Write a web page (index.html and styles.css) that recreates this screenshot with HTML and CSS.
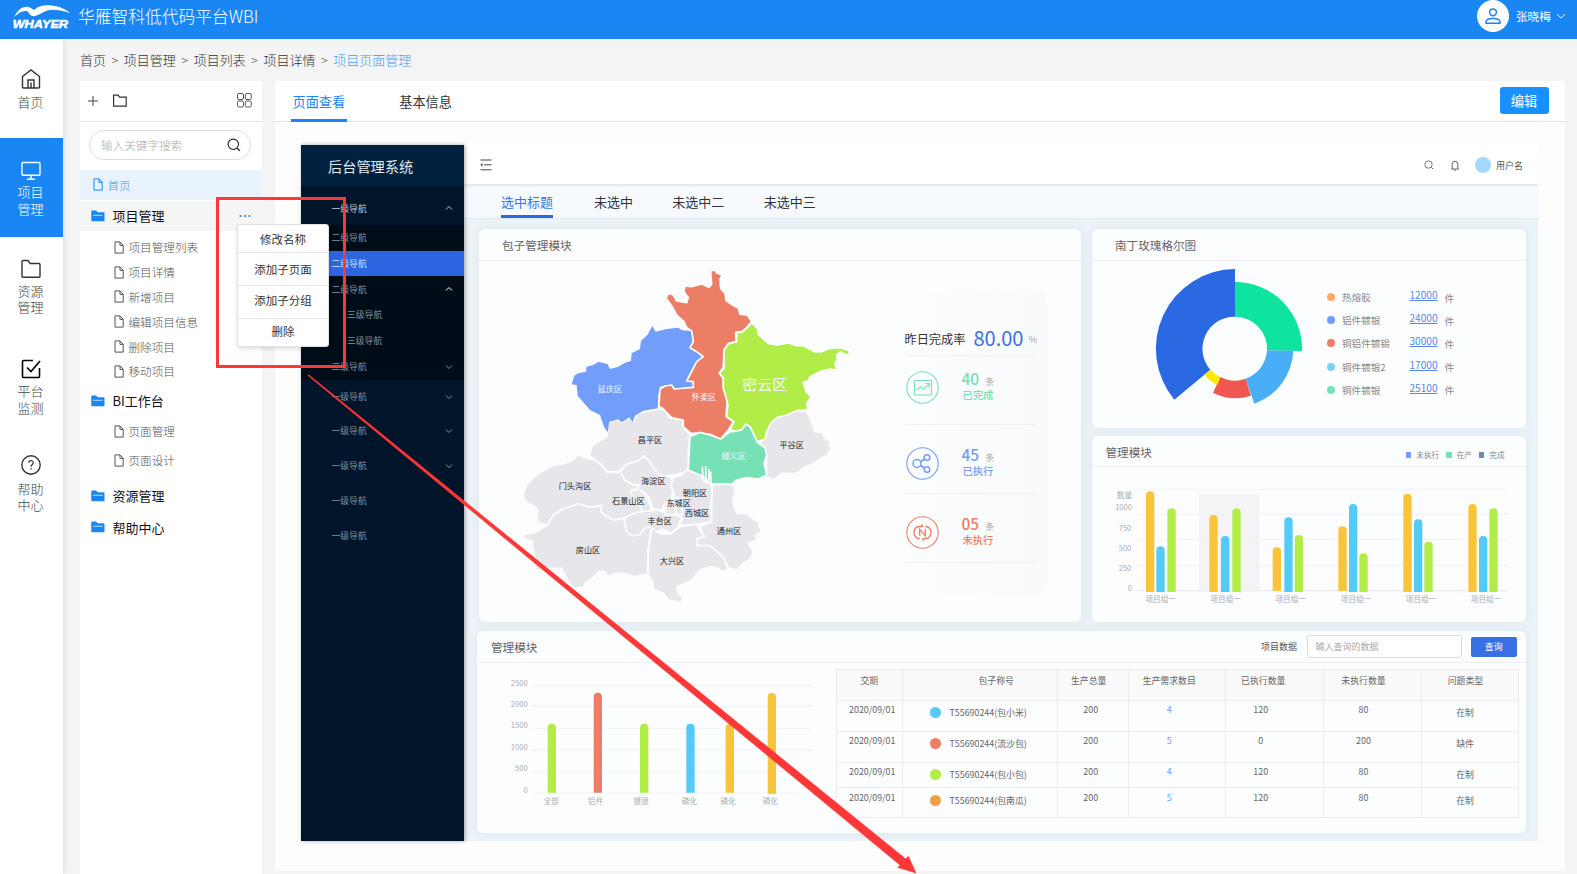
FILE: index.html
```html
<!DOCTYPE html>
<html lang="zh-CN">
<head>
<meta charset="utf-8">
<title>华雁智科低代码平台WBI</title>
<link rel="stylesheet" href="styles.css">
</head>
<body>
<svg class="defs" width="0" height="0">
  <symbol id="file" viewBox="0 0 10 13"><path d="M1 .9h5l3.2 3.3v7.9H1zM6 1v3.4h3.1" fill="none" stroke="currentColor" stroke-linejoin="round"/></symbol>
  <symbol id="folder" viewBox="0 0 14 12"><path d="M.3 1.200Q.3.4 1.100.4h4l1.500 1.800h6.100q.8 0 .8.800v7.400q0 .9-.9.900H1.200q-.9 0-.9-.9z" fill="#1b86f2"/><path d="M2.300 5.300h9.200" stroke="#b9dcff"/></symbol>
  <symbol id="up" viewBox="0 0 8 6"><path d="M1 4.500 4 1.500l3 3" fill="none" stroke="currentColor"/></symbol>
  <symbol id="down" viewBox="0 0 8 6"><path d="M1 1.500l3 3 3-3" fill="none" stroke="currentColor"/></symbol>
  <symbol id="search" viewBox="0 0 14 14"><circle cx="6.300" cy="6.300" r="5.200" fill="none" stroke="currentColor" stroke-width="1.100"/><path d="M10.200 10.200l2.700 2.700" stroke="currentColor" stroke-width="1.300"/></symbol>
</svg>

<header class="topbar">
  <svg class="logo" viewBox="36 0 180 117" width="60" height="39">
    <path d="M43 51C52 31 65 19 81 20C90 21 97 26 102 30C113 19 129 14 149 16C178 18 200 29 211 40C187 31 163 27 144 31C127 35 117 48 100 49C91 49 88 39 82 34C69 31 56 38 43 51Z" fill="#fff"/>
    <text x="38" y="84" textLength="166" lengthAdjust="spacingAndGlyphs" class="logo-text">WHAYER</text>
  </svg>
  <h1>华雁智科低代码平台WBI</h1>
  <div class="account">
    <svg width="32" height="32" viewBox="0 0 32 32"><circle cx="16" cy="16" r="16" fill="#fff"/><g fill="none" stroke="#1b86f2" stroke-width="1.500"><circle cx="16" cy="12.300" r="3.400"/><path d="M9 23.200v-1.200c0-2.500 3.500-3.600 7-3.600s7 1.100 7 3.600v1.200z"/></g></svg>
    <span>张晓梅</span>
    <svg width="10" height="7" viewBox="0 0 10 7"><path d="M1 1l4 4 4-4" fill="none" stroke="#fff"/></svg>
  </div>
</header>

<div class="shell">
  <nav class="rail">
    <a class="rail-item home"><svg width="20" height="20" viewBox="0 0 20 20"><path d="M1.500 7.500 10 1l8.500 6.500V18q0 1-1 1h-15q-1 0-1-1zM7 19v-8h6v8M10 13.500V19"/></svg><span>首页</span></a>
    <a class="rail-item active"><svg width="20" height="20" viewBox="0 0 20 20"><path d="M2 1.500h16q1 0 1 1v10.700q0 1-1 1H2q-1 0-1-1V2.500q0-1 1-1zM10 14.200V18M6 18.300h8"/></svg><span>项目<br>管理</span></a>
    <a class="rail-item"><svg width="20" height="20" viewBox="0 0 20 20"><path d="M2 1.500h5l2.200 3H18q1 0 1 1v11.700q0 1-1 1H2q-1 0-1-1V2.500q0-1 1-1z"/></svg><span>资源<br>管理</span></a>
    <a class="rail-item dark"><svg width="20" height="20" viewBox="0 0 20 20"><path d="M12 1.500H2.500q-1 0-1 1v15q0 1 1 1h15q1 0 1-1V9M6 8.500l4 4L19 2"/></svg><span>平台<br>监测</span></a>
    <a class="rail-item help"><svg width="20" height="20" viewBox="0 0 20 20"><circle cx="10" cy="10" r="9.200"/><path d="M7.700 7.800Q7.900 5.700 10 5.700t2.300 2q0 1.200-1.300 2-1 .7-1 2.100M10 13v1.400" stroke-width="1.200"/></svg><span>帮助<br>中心</span></a>
  </nav>

  <main>
    <div class="crumbs"><span>首页</span><i>&gt;</i><span>项目管理</span><i>&gt;</i><span>项目列表</span><i>&gt;</i><span>项目详情</span><i>&gt;</i><b>项目页面管理</b></div>
    <div class="columns">
      <aside class="tree">
        <div class="tree-tools">
          <svg width="10" height="10" viewBox="0 0 10 10"><path d="M5 0v10M0 5h10" stroke="#444"/></svg>
          <svg class="tool-folder" width="14" height="13" viewBox="0 0 14 13"><path d="M.6 1.100h4.500l1.500 2h6.600v9.100H.6z" fill="none" stroke="#333" stroke-width="1.200"/></svg>
          <svg class="tool-grid" width="15" height="15" viewBox="0 0 15 15"><g fill="none" stroke="#555"><rect x=".5" y=".5" width="6" height="6" rx="1.500"/><rect x="8.300" y=".5" width="6" height="6" rx="1.500"/><rect x=".5" y="8" width="6" height="6" rx="1.500"/><rect x="8.300" y="8" width="6" height="6" rx="1.500"/></g></svg>
        </div>
        <div class="tree-search"><span>输入关键字搜索</span><svg width="14" height="14"><use href="#search"/></svg></div>
        <ul>
          <li class="root"><svg width="10" height="13"><use href="#file"/></svg>首页</li>
          <li class="group open"><svg width="14" height="12"><use href="#folder"/></svg>项目管理<svg class="dots" width="12" height="4" viewBox="0 0 12 4"><g fill="#1b86f2"><circle cx="1.500" cy="2" r="1.100"/><circle cx="6" cy="2" r="1.100"/><circle cx="10.500" cy="2" r="1.100"/></g></svg></li>
          <li class="leaf"><svg width="10" height="13"><use href="#file"/></svg>项目管理列表</li>
          <li class="leaf"><svg width="10" height="13"><use href="#file"/></svg>项目详情</li>
          <li class="leaf"><svg width="10" height="13"><use href="#file"/></svg>新增项目</li>
          <li class="leaf"><svg width="10" height="13"><use href="#file"/></svg>编辑项目信息</li>
          <li class="leaf"><svg width="10" height="13"><use href="#file"/></svg>删除项目</li>
          <li class="leaf"><svg width="10" height="13"><use href="#file"/></svg>移动项目</li>
          <li class="group bi"><svg width="14" height="12"><use href="#folder"/></svg>BI工作台</li>
          <li class="leaf pages"><svg width="10" height="13"><use href="#file"/></svg>页面管理</li>
          <li class="leaf design"><svg width="10" height="13"><use href="#file"/></svg>页面设计</li>
          <li class="group res"><svg width="14" height="12"><use href="#folder"/></svg>资源管理</li>
          <li class="group hlp"><svg width="14" height="12"><use href="#folder"/></svg>帮助中心</li>
        </ul>
        <div class="menu"><a>修改名称</a><a>添加子页面</a><a>添加子分组</a><a>删除</a></div>
      </aside>

      <section class="panel">
        <div class="panel-tabs"><a class="on">页面查看</a><a>基本信息</a><button>编辑</button></div>
        <div class="preview">
          <div class="side">
            <div class="side-title">后台管理系统</div>
            <div class="nav1 first">一级导航<svg width="8" height="6"><use href="#up"/></svg></div>
            <div class="sub">
              <div>二级导航</div>
              <div class="sel">二级导航</div>
              <div class="lit">二级导航<svg width="8" height="6"><use href="#up"/></svg></div>
              <div class="third">三级导航</div>
              <div class="third">三级导航</div>
              <div class="end-row">二级导航<svg width="8" height="6"><use href="#down"/></svg></div>
            </div>
            <div class="nav1 tight">一级导航<svg width="8" height="6"><use href="#down"/></svg></div>
            <div class="nav1">一级导航<svg width="8" height="6"><use href="#down"/></svg></div>
            <div class="nav1">一级导航<svg width="8" height="6"><use href="#down"/></svg></div>
            <div class="nav1">一级导航</div>
            <div class="nav1">一级导航</div>
          </div>
          <div class="board">
            <div class="board-head">
              <svg width="12" height="12" viewBox="0 0 12 12"><path d="M.5 1h11M4 5.800h7.500M.5 10.800h11" stroke="#444"/><path d="M2.500 3.800v4L.5 5.800z" fill="#444"/></svg>
              <svg class="bh-search" width="10" height="10"><use href="#search"/></svg>
              <svg class="bh-bell" width="8" height="11" viewBox="0 0 8 11"><path d="M1.200 9V4.200Q1.200 1.200 4 1.200t2.800 3V9M.2 9h7.600M3.200 10.300h1.600" fill="none" stroke="#555" stroke-width=".9"/></svg>
              <i class="bh-avatar"></i><span>用户名</span>
            </div>
            <div class="board-tabs"><a class="on">选中标题</a><a>未选中</a><a>未选中二</a><a>未选中三</a></div>
            <div class="cards">
              <section class="card map-card">
                <h2>包子管理模块</h2>
                <div class="map-body">
                  <svg class="map" viewBox="0 18 1050 1062" width="350" height="354">
                    <g stroke="#fcfdff" stroke-width="5" stroke-linejoin="round">
                      <g fill="#e7e6eb">
                        <path d="M38 718L50 690L78 660L105 645L125 632L160 627L190 615L203 598L222 608L255 615L275 630L290 650L335 652L345 676L372 690L392 688L388 707L362 707L368 730L390 752L415 755L425 770L380 772L345 790L308 795L285 780L272 770L275 752L240 757L205 747L160 762L130 780L110 812L80 798L85 770L75 755L45 738Z"/>
                        <path d="M38 840L75 832L110 812L130 780L160 762L205 747L240 757L275 752L272 770L290 784L308 795L342 790L350 830L368 842L388 840L405 818L425 816L415 875L412 957L375 965L340 955L312 956L292 966L286 950L268 950L245 972L225 985L220 998L190 1000L172 975L155 940L118 940L76 946L80 925L68 880L66 858L45 852Z"/>
                        <path d="M238 600L248 570L290 545L297 500L325 493L335 502L358 487L370 500L383 477L420 468L458 460L480 488L518 495L522 520L540 540L535 585L535 640L522 652L490 660L472 662L455 665L430 640L420 620L400 603L385 617L350 628L325 650L292 650L275 630L255 615Z"/>
                        <path d="M330 650L350 628L385 617L400 603L420 620L430 640L455 665L480 662L490 690L485 730L465 745L455 768L428 760L415 725L395 707L372 705L392 688L372 690L345 676Z"/>
                        <path d="M362 707L385 703L405 718L420 748L425 770L400 773L388 750L370 735Z"/>
                        <path d="M342 790L380 772L440 765L500 780L515 785L505 815L485 835L455 822L435 838L425 816L405 818L388 840L368 842L350 830Z"/>
                        <path d="M483 690L490 668L515 660L530 645L570 660L583 680L603 686L607 720L600 760L605 800L575 805L535 810L510 812L518 790L492 775L485 745L500 730L490 715Z"/>
                        <path d="M467 745L497 727L497 779L465 779Z"/><path d="M499 727L515 730L516 779L499 779Z"/>
                        <path d="M607 690L640 688L668 682L675 715L668 740L680 775L710 775L738 798L743 792L748 815L755 830L736 842L740 855L715 865L730 890L722 910L700 925L680 945L655 938L642 910L610 880L595 872L560 872L562 850L582 845L570 815L605 800L605 765Z"/>
                        <path d="M425 820L455 838L485 835L510 815L560 808L582 845L562 850L560 872L595 872L610 880L642 910L653 942L640 950L620 938L600 935L570 945L555 965L540 978L500 995L505 1015L520 1030L515 1042L475 1035L460 1015L430 1002L428 980L414 957L415 890Z"/>
                        <path d="M770 530L785 495L820 482L855 468L890 468L905 500L915 530L937 532L945 550L962 560L958 572L968 583L955 590L952 605L940 605L910 625L880 640L860 655L815 655L790 675L770 665L770 600L750 568Z"/>
                      </g>
                      <path d="M185 388L193 362L205 355L228 350L230 335L250 330L265 320L293 328L300 342L325 335L345 323L363 318L365 295L390 282L393 258L412 240L427 213L437 230L470 222L505 218L515 226L545 228L548 262L540 278L562 292L578 308L560 320L552 345L530 378L550 383L550 395L520 398L493 402L480 390L450 395L445 420L443 460L400 467L375 482L368 502L358 487L335 502L325 493L298 500L293 532L282 515L270 480L240 465L203 422L200 390Z" fill="#729dfa" stroke="none"/>
                      <path d="M468 130L475 115L490 120L500 138L530 143L535 128L522 110L525 93L545 95L575 87L597 97L605 88L602 48L615 45L620 54L636 60L630 72L632 100L645 115L648 137L668 150L685 160L690 178L712 180L725 200L708 220L695 230L677 232L678 260L655 265L642 285L640 335L628 355L640 370L640 400L652 435L648 485L670 500L655 525L632 552L600 538L565 534L543 535L520 515L520 495L485 488L458 460L447 455L450 402L465 393L485 390L493 402L550 397L550 380L530 378L560 320L580 305L560 290L540 278L550 260L545 228L530 218L522 200L500 180L485 152Z" fill="#eb7e65"/>
                      <path d="M680 260L680 232L695 232L712 218L725 203L743 222L745 238L760 252L775 265L800 270L835 264L860 272L880 272L905 285L915 291L935 290L960 280L990 278L1020 288L1015 300L1000 297L992 290L980 300L982 315L975 325L980 345L960 342L930 350L900 365L894 378L880 382L888 410L903 425L890 445L894 465L865 465L830 480L800 488L782 505L770 530L765 553L742 560L720 515L708 508L695 525L670 530L662 522L672 500L650 485L654 450L640 400L640 370L628 354L642 340L642 285L655 267Z" fill="#b2ec46"/>
                      <path d="M540 545L570 532L600 540L632 552L660 530L670 530L695 525L708 508L720 515L742 562L765 578L770 600L762 625L770 660L745 672L710 668L680 675L665 688L603 686L580 665L570 660L535 645Z" fill="#76e0b6"/>
                    </g>
                    <path d="M577 635l2 38M587 634l1 38q6 8 9 0v-30M602 650l1 34" fill="none" stroke="#fff" stroke-width="5"/>
                    <g class="map-names"><g class="white"><text x="300" y="411">延庆区</text><text x="582" y="436">怀柔区</text><text x="671" y="613">顺义区</text><text class="big" x="764" y="406">密云区</text></g>
                    <text x="420" y="565">昌平区</text><text x="845" y="579">平谷区</text><text x="195" y="702">门头沟区</text><text x="430" y="688">海淀区</text><text x="355" y="747">石景山区</text><text x="555" y="722">朝阳区</text><text x="506" y="752">东城区</text><text x="561" y="783">西城区</text><text x="449" y="807">丰台区</text><text x="657" y="837">通州区</text><text x="234" y="895">房山区</text><text x="486" y="926">大兴区</text></g>
                  </svg>
                  <div class="stats">
                    <div class="rate"><span>昨日完成率</span><b>80.00</b><small>%</small></div>
                    <div class="stat green"><svg width="33" height="33" viewBox="0 0 33 33"><circle cx="16.500" cy="16.500" r="15.700"/><rect x="8.500" y="9.500" width="17" height="14.500" rx=".8"/><path d="M11 19l3.500-3.500 3 3 5.500-5.700M19.500 12.500h3.700v4.500"/></svg><div><b>40</b><small>条</small><p>已完成</p></div></div>
                    <div class="stat blue"><svg width="33" height="33" viewBox="0 0 33 33"><circle cx="16.500" cy="16.500" r="15.700"/><g stroke-width="1.500"><circle cx="11" cy="16.500" r="4"/><circle cx="21" cy="10.500" r="2.800"/><circle cx="21" cy="22.500" r="2.800"/><path d="M14.600 14.500l4-2.500M14.600 18.500l4 2.500"/></g></svg><div><b>45</b><small>条</small><p>已执行</p></div></div>
                    <div class="stat red"><svg width="33" height="33" viewBox="0 0 33 33"><circle cx="16.500" cy="16.500" r="15.700"/><path d="M16.500 10.500h-3.500a5 6 0 0 0 0 12h.8M19.300 10.500h.7a5 6 0 0 1 0 12h-3.200M15.500 8.300l1.300 2.200M17.500 24.900l-1-2.400M13.700 19.800v-6.600l5.600 6.600v-6.600" stroke-width="1.300"/></svg><div><b>05</b><small>条</small><p>未执行</p></div></div>
                  </div>
                </div>
              </section>
              <section class="card rose-card">
                <h2>南丁玫瑰格尔图</h2>
                <div class="rose-body">
                  <svg viewBox="6 108 690 500" width="230" height="166.700">
                    <path d="M435 132A239 239 0 0 0 253 524L361 434A96 96 0 0 1 435 275Z" fill="#2b69e2"/>
                    <path d="M435 171A200 200 0 0 1 636 378L531 376A96 96 0 0 0 435 275Z" fill="#0ee3a0"/>
                    <path d="M610 377A175 175 0 0 1 493 536L467 461A96 96 0 0 0 531 376Z" fill="#4aaef7"/>
                    <path d="M483 512A148 148 0 0 1 369 503L391 456A96 96 0 0 0 467 461Z" fill="#f0574e"/>
                    <path d="M382 480A122 122 0 0 1 343 449L361 434A96 96 0 0 0 391 456Z" fill="#ffe900"/>
                  </svg>
                  <ul class="legend">
                    <li><i class="c-orange"></i><span>热熔胶</span><a>12000</a><em>件</em></li>
                    <li><i class="c-blue"></i><span>铝件镀银</span><a>24000</a><em>件</em></li>
                    <li><i class="c-red"></i><span>铜铝件镀锡</span><a>30000</a><em>件</em></li>
                    <li><i class="c-sky"></i><span>铜件镀银2</span><a>17000</a><em>件</em></li>
                    <li><i class="c-green"></i><span>铜件镀银</span><a>25100</a><em>件</em></li>
                  </ul>
                </div>
              </section>
              <section class="card bars-card">
                <h2>管理模块<span class="keys"><i class="c-blue"></i>未执行<i class="c-green"></i>在产<i class="c-slate"></i>完成</span></h2>
                <svg viewBox="6 111 1302 464" width="434" height="154.700">
                  <rect x="327" y="192" width="182" height="292" fill="#f4f4f6"/>
                  <path d="M142 178h1110M142 253h1110M142 328h1110M142 406h1110" stroke="#f0f1f4" stroke-width="3"/><path d="M142 482h1110M1108 482v8" stroke="#e6e9ef" stroke-width="3" fill="none"/>
                  <g fill="#f8c53a"><path d="M168 486V196q0-12 12.500-12t12.500 12V486z"/><path d="M358 486V267q0-12 12.500-12t12.500 12V486z"/><path d="M548 483V364q0-12 12.500-12t12.500 12V483z"/><path d="M745 483V301q0-12 12.500-12t12.500 12V483z"/><path d="M940 486V203q0-12 12.500-12t12.500 12V486z"/><path d="M1135 486V234q0-12 12.500-12t12.500 12V486z"/></g>
                  <g fill="#54caf6"><path d="M199 486V361q0-12 12.500-12t12.500 12V486z"/><path d="M393 486V330q0-12 12.500-12t12.500 12V486z"/><path d="M583 486V274q0-12 12.500-12t12.500 12V486z"/><path d="M777 486V234q0-12 12.500-12t12.500 12V486z"/><path d="M972 486V280q0-12 12.500-12t12.500 12V486z"/><path d="M1167 486V330q0-12 12.500-12t12.500 12V486z"/></g>
                  <g fill="#b2ec46"><path d="M232 486V247q0-12 12.500-12t12.500 12V486z"/><path d="M427 486V247q0-12 12.500-12t12.500 12V486z"/><path d="M614 486V327q0-12 12.500-12t12.500 12V486z"/><path d="M808 486V382q0-12 12.500-12t12.500 12V486z"/><path d="M1003 486V347q0-12 12.500-12t12.500 12V486z"/><path d="M1198 486V247q0-12 12.500-12t12.500 12V486z"/></g>
                  <g class="axis end"><text x="126" y="203">数量</text><text x="126" y="241">1000</text><text x="124" y="303">750</text><text x="124" y="363">500</text><text x="124" y="423">250</text><text x="126" y="482">0</text></g>
                  <g class="axis"><text x="212" y="517">项目组一</text><text x="407" y="517">项目组一</text><text x="602" y="517">项目组一</text><text x="798" y="517">项目组一</text><text x="993" y="517">项目组一</text><text x="1188" y="517">项目组一</text></g>
                </svg>
              </section>
              <section class="card data-card">
                <div class="data-head"><h2>管理模块</h2><label>项目数据</label><div class="field">输入查询的数据</div><button>查询</button></div>
                <div class="data-body">
                  <svg viewBox="21 114 1077 510" width="359" height="170">
                    <path d="M188 181h838M188 244h838M188 310h838M188 374h838M188 439h838M188 504h838" stroke="#f0f2f5" stroke-width="3"/>
                    <path d="M233 503V309q0-13 12.500-13t12.500 13V503z" fill="#b2ec46"/><path d="M371 503V216q0-13 12.500-13t12.500 13V503z" fill="#eb7e65"/><path d="M510 503V309q0-13 12.500-13t12.500 13V503z" fill="#b2ec46"/><path d="M649 503V309q0-13 12.500-13t12.500 13V503z" fill="#54caf6"/><path d="M767 503V309q0-13 12.500-13t12.500 13V503z" fill="#f8c53a"/><path d="M893 506V217q0-13 12.500-13t12.500 13V506z" fill="#f8c53a"/>
                    <g class="axis end"><text x="173" y="182">2500</text><text x="173" y="246">2000</text><text x="173" y="309">1500</text><text x="173" y="375">1000</text><text x="173" y="439">500</text><text x="173" y="504">0</text></g>
                    <g class="axis"><text x="244" y="538">全部</text><text x="377" y="538">铝件</text><text x="513" y="538">镀银</text><text x="658" y="538">磷化</text><text x="774" y="538">磷化</text><text x="901" y="538">磷化</text></g>
                  </svg>
                  <table>
                    <colgroup><col class="w1"><col class="w2"><col class="w3"><col class="w4"><col class="w5"><col class="w6"><col class="w7"></colgroup>
                    <tr class="th"><td class="date-th">交期</td><td class="name-th">包子称号</td><td>生产总量</td><td>生产需求数目</td><td>已执行数量</td><td>未执行数量</td><td>问题类型</td></tr>
                    <tr><td class="date">2020/09/01</td><td class="name"><i class="c-cyan"></i>T55690244(包小米)</td><td>200</td><td class="num">4</td><td>120</td><td>80</td><td class="kind">在制</td></tr>
                    <tr><td class="date">2020/09/01</td><td class="name"><i class="c-red"></i>T55690244(流沙包)</td><td>200</td><td class="num">5</td><td>0</td><td>200</td><td class="kind">缺件</td></tr>
                    <tr class="short"><td class="date">2020/09/01</td><td class="name"><i class="c-lime"></i>T55690244(包小包)</td><td>200</td><td class="num">4</td><td>120</td><td>80</td><td class="kind">在制</td></tr>
                    <tr class="last"><td class="date">2020/09/01</td><td class="name"><i class="c-amber"></i>T55690244(包南瓜)</td><td>200</td><td class="num">5</td><td>120</td><td>80</td><td class="kind">在制</td></tr>
                  </table>
                </div>
              </section>
            </div>
          </div>
        </div>
      </section>
    </div>
  </main>
</div>
<svg class="callout" width="1577" height="874" viewBox="0 0 1577 874"><rect x="217.500" y="198.500" width="127" height="168" fill="none" stroke="#fc3737" stroke-width="3"/><path d="M308.800 374.800L905.600 858.800L908.500 856.300L916 873L897.700 867.600L900.200 865.300L308.200 375.800Z" fill="#fc3737" stroke="#fc3737" stroke-width=".5"/></svg>
</body>
</html>
```

FILE: styles.css
```css
* { box-sizing: border-box; }
html, body { margin: 0; height: 874px; overflow: hidden; }
body { position: relative; background: #f4f4f4; font-family: "Noto Sans CJK SC", "Noto Sans", sans-serif; color: #333; font-size: 13px; }
ul { list-style: none; margin: 0; padding: 0; }
h1, h2, p { margin: 0; font-weight: 400; }
i, em { font-style: normal; }
svg { display: block; flex: none; }
button { border: 0; padding: 0; font-family: inherit; color: #fff; }
.defs { position: absolute; }

/* Top bar */
.topbar { height: 39px; background: #1a86f3; display: flex; align-items: center; padding-left: 12px; color: #fff; }
.logo-text { font: italic 700 33px "Liberation Sans", sans-serif; fill: #fff; stroke: #fff; stroke-width: 1.5; }
.topbar h1 { font-size: 16.750px; font-weight: 300; line-height: 32px; height: 39px; margin-left: 6px; white-space: nowrap; }
.account { margin-left: auto; display: flex; align-items: center; height: 32px; align-self: flex-start; margin-right: 11px; font-size: 11.7px; }
.account span { margin: 0 5px 1px 7px; }

.shell { display: flex; height: 835px; }
.rail { width: 63px; background: #fff; box-shadow: 1px 0 5px rgba(0,0,0,.1); flex: none; }
.rail-item { display: flex; flex-direction: column; align-items: center; padding-right: 2px; height: 98.500px; padding-top: 22px; color: #444; font-size: 13px; line-height: 16.7px; text-align: center; font-weight: 300; }
.rail-item svg { fill: none; stroke: #333; stroke-width: 1.4; }
.rail-item span { margin-top: 4px; }
.rail-item.home { height: 99px; padding-top: 30px; }
.rail-item.home span { margin-top: 5px; }
.rail-item.active { background: #1a86f3; color: #fff; padding-top: 23px; }
.rail-item.active svg { stroke: #fff; }
.rail-item.active span { margin-top: 3px; }
.rail-item.dark { padding-top: 24px; }
.rail-item.dark svg { stroke: #000; stroke-width: 1.6; }
.rail-item.help { padding-top: 21px; }
.rail-item.help span { margin-top: 6px; }

main { flex: 1; padding-left: 17px; min-width: 0; }
.crumbs { height: 41.800px; line-height: 42px; display: flex; color: #333; font-weight: 300; white-space: nowrap; }
.crumbs i { width: 17.800px; text-align: center; font-size: 12px; }
.crumbs b { font-weight: 300; color: #459aee; }
.columns { display: flex; height: 793.200px; }

/* Page tree */
.tree { width: 181.500px; background: #fff; position: relative; flex: none; }
.tree-tools { height: 41.200px; border-bottom: 1px solid #e4e4e4; display: flex; align-items: center; padding: 0 9.500px 0 8px; }
.tool-folder { margin-left: 14.500px; }
.tool-grid { margin-left: auto; }
.tree-search { margin: 8px 10.500px 10px 9px; height: 30px; border: 1px solid #dedede; border-radius: 15px; display: flex; align-items: center; justify-content: space-between; padding: 0 9px 0 11px; font-size: 11.600px; color: #aaa; font-weight: 300; }
.tree-search svg { color: #222; }
.tree li { display: flex; align-items: center; white-space: nowrap; }
.root { height: 30px; background: #e8f3fe; color: #459aee; padding-left: 12.500px; font-size: 11.600px; font-weight: 300; }
.root svg { margin-right: 5px; color: #1b86f2; }
.group { height: 31px; font-size: 13px; color: #111; padding-left: 11px; }
.group > svg:first-child { margin-right: 7.500px; }
.group.open { background: #f5f5f5; margin-bottom: 4px; margin-top: 1px; height: 30px; }
.group .dots { margin-left: auto; margin-right: 10.500px; }
.leaf { height: 24.800px; font-size: 11.600px; color: #555; padding-left: 33.500px; font-weight: 300; }
.leaf svg { margin-right: 5px; }
.group.bi { height: 34px; }
.leaf.pages { height: 27px; }
.leaf.design { height: 31px; }
.group.res { height: 40px; }
.group.hlp { height: 23px; }
.menu { position: absolute; left: 157px; top: 143.500px; width: 92px; z-index: 5; background: #fff; border-radius: 3px; border: 1px solid #e2e2e2; box-shadow: 0 2px 4px rgba(0,0,0,.12); text-align: center; font-size: 11.500px; color: #333; }
.menu a { display: block; height: 33px; line-height: 33px; border-bottom: 1px solid #e4e4e4; }
.menu a:first-child { height: 28px; line-height: 28px; }
.menu a:nth-child(3) { line-height: 29px; }
.menu a:last-child { height: 27px; line-height: 24px; border: 0; }

/* Content panel */
.panel { margin-left: 13px; width: 1290px; height: 790.500px; background: #fdfdfd; flex: none; }
.panel-tabs { height: 41.200px; background: #fff; border-bottom: 1px solid #e2e2e2; display: flex; padding-left: 16px; }
.panel-tabs a { height: 41.200px; line-height: 42px; padding: 0 2px; margin-right: 50px; font-size: 13.200px; }
.panel-tabs .on { color: #1b86f2; border-bottom: 3px solid #1b86f2; }
.panel-tabs button { margin: 6.500px 16px 0 auto; width: 49px; height: 27px; border-radius: 3px; background: #1890ff; font-size: 13.300px; }
.preview { display: flex; margin: 23px 0 0 26px; width: 1237px; height: 696px; }
.side { width: 163px; background: #001529; color: #8a939c; font-size: 8.800px; flex: none; box-shadow: 1px 0 4px rgba(0,0,0,.35); z-index: 1; }
.side-title { height: 41px; line-height: 42px; padding-left: 27.500px; font-size: 14.200px; color: #e4e9ed; background: #00223f; }
.nav1, .sub div { display: flex; align-items: center; justify-content: space-between; padding: 0 10.500px 0 31px; height: 35px; }
.nav1.first { height: 39px; padding-top: 6px; color: #c8ced4; }
.nav1.tight { height: 33px; }
.sub { background: #000c17; }
.sub div { height: 25.700px; }
.sub .sel { background: #2b65e0; color: #d5e0f8; }
.sub .lit svg { color: #fff; }
.sub .third { padding-left: 46.500px; }
.sub .end-row { height: 26.700px; }

.board { flex: 1; background: #ebf2f8; min-width: 0; color: #555; }
.board-head { height: 40px; background: #fff; border-bottom: 1px solid #e6e6e6; display: flex; align-items: center; padding: 2px 14.500px 0 16px; font-size: 9px; }
.bh-search { margin-left: auto; margin-right: 17px; }
.bh-avatar { width: 16px; height: 16px; border-radius: 50%; background: #a4d8fe; margin: 0 5px 0 16px; }
.board-tabs { height: 34px; border-top: 2px solid #eef1f4; border-bottom: 1px solid #e2e7ec; background: #f6fafe; display: flex; padding-left: 37.500px; font-size: 13px; line-height: 29px; color: #333; }
.board-tabs a { margin-right: 39.300px; height: 31px; white-space: nowrap; }
.board-tabs .on { color: #3b72e8; border-bottom: 3px solid #2b69e2; margin-right: 41px; }

.cards { display: grid; grid-template-columns: 602px 434px; grid-template-rows: 199px 187px 202px; column-gap: 11px; row-gap: 8px; padding: 10.500px 12px 0 15px; }
.card { background: #fcfdff; border-radius: 6px; box-shadow: 0 0 8px rgba(100,130,150,.09); min-width: 0; overflow: hidden; }
.card h2 { font-size: 11.600px; height: 31.500px; line-height: 33px; padding-left: 23.500px; border-bottom: 1px solid #eceef0; color: #666; white-space: nowrap; }
.map-card { grid-row: 1 / 3; height: 392.500px; }
.bars-card { height: 186px; }
.map-body { display: flex; padding-left: 31px; }
.map-names { font-size: 24.500px; text-anchor: middle; fill: #222; }
.map-names .white { fill: #f4f7ff; }
.map-names .big { font-size: 45px; }
.stats { width: 143px; height: 305px; margin: 29px 0 0 45px; padding: 30px 10px 0 0; border-radius: 16px; background: linear-gradient(90deg, #fcfdff, #f9fafc); }
.rate { height: 36px; padding-top: 4px; display: flex; align-items: center; border-bottom: 1px solid #eff0f3; white-space: nowrap; }
.rate span { font-size: 12.200px; color: #333; }
.rate b { font-size: 20px; font-weight: 400; color: #3a70e6; margin: 0 5px 2px 8px; line-height: 24px; }
.rate small { font-size: 9.500px; color: #aaa; }
.stat { height: 69px; border-bottom: 1px solid #f4eff2; display: flex; padding: 15px 0 0 1.500px; color: currentColor; }
.stat svg { fill: none; stroke: currentColor; stroke-width: 1.1; }
.stat div { margin: -2px 0 0 22.500px; height: 40px; line-height: 16px; }
.stat b { font-size: 15.500px; font-weight: 500; line-height: 18px; }
.stat small { font-size: 9px; color: #aaa; margin-left: 6px; line-height: 16px; }
.stat p { font-size: 10.300px; line-height: 15px; font-weight: 500; margin-top: -3px; padding-left: 1px; }
.stat.blue { padding-top: 22px; }
.stat.green { color: #76e0b6; }
.stat.blue { color: #729dfa; }
.stat.red { color: #eb7e65; padding-top: 22px; }

.rose-body { display: flex; }
.legend { margin: 24.500px 0 0 5px; font-size: 9.600px; color: #888; }
.legend li { display: grid; grid-template-columns: 15.500px 67.500px 35px 12px; height: 23.200px; align-items: center; }
.legend i { width: 8px; height: 8px; border-radius: 50%; }
.legend a { color: #5a86e8; text-decoration: underline; font-size: 10.100px; margin-bottom: 5px; }
.legend em { padding-top: 1px; }
.bars-card h2 { padding: 0 21px 0 14px; height: 31px; line-height: 32px; display: flex; justify-content: space-between; }
.keys { display: flex; align-items: center; font-size: 7.600px; color: #888; padding-top: 7px; }
.keys i { width: 5.500px; height: 5.500px; margin: 0 5px 0 7px; }
.axis { font-size: 22.800px; fill: #aaadb3; text-anchor: middle; }
.end { text-anchor: end; }

.data-card { grid-column: 1 / 3; margin-left: -2px; }
.data-head { display: flex; align-items: center; height: 32px; border-bottom: 1px solid #eceef0; padding-right: 9px; font-size: 9px; }
.data-head h2 { border: 0; margin-right: auto; padding-left: 14.500px; }
.field { width: 155px; height: 23px; line-height: 21px; border: 1px solid #dcdcdc; border-radius: 3px; background: #fff; padding-left: 8px; margin: 0 9.500px; color: #aaa; }
.data-head button { width: 45.500px; height: 19.500px; border-radius: 2px; background: #3870e4; font-size: 9px; }
.data-body { display: flex; align-items: flex-start; }
table { width: 682px; margin-top: 6px; border-collapse: collapse; table-layout: fixed; font-size: 8.900px; color: #666; text-align: center; flex: none; line-height: 12px; }
.w1 { width: 66.500px; } .w2 { width: 154.500px; } .w3 { width: 71.500px; } .w4 { width: 97px; } .w5 { width: 97.500px; } .w6 { width: 98px; } .w7 { width: 97px; }
td { border: 1px solid #ebecee; padding: 3px 4px 0 0; vertical-align: top; height: 31px; white-space: nowrap; }
.th td { background: #fafafa; padding-top: 5px; padding-right: 8px; }
.th td.date-th { padding-right: 0; }
.th td.name-th { padding-left: 41px; }
td.date { padding: 3px 0 0 6px; }
td.name { padding: 6px 0 0 26.500px; text-align: left; }
.name i { display: inline-block; width: 11px; height: 11px; border-radius: 50%; vertical-align: -2px; margin-right: 9px; }
td.num { color: #729dfa; }
.short td { height: 25px; }
.last td { height: 30px; padding-top: 3.500px; }
td.num, .th td:nth-child(4) { padding-right: 15.500px; }
td:nth-child(5) { padding-right: 27px; }
.th td:nth-child(5) { padding-right: 22px; }
td:nth-child(6) { padding-right: 17px; }
td.kind { padding: 6px 9px 0 0; }
.last td.name, .last td.kind { padding-top: 7px; }

.c-orange { background: #ffa964; } .c-blue { background: #729dfa; } .c-red { background: #eb7e65; } .c-sky { background: #80d1f0; } .c-green { background: #76e0b6; }
.c-slate { background: #738ba9; } .c-cyan { background: #54caf6; } .c-lime { background: #b2ec46; } .c-amber { background: #eea047; }

/* Highlight frame and arrow over the page */
.callout { position: absolute; left: 0; top: 0; z-index: 10; pointer-events: none; }
```
